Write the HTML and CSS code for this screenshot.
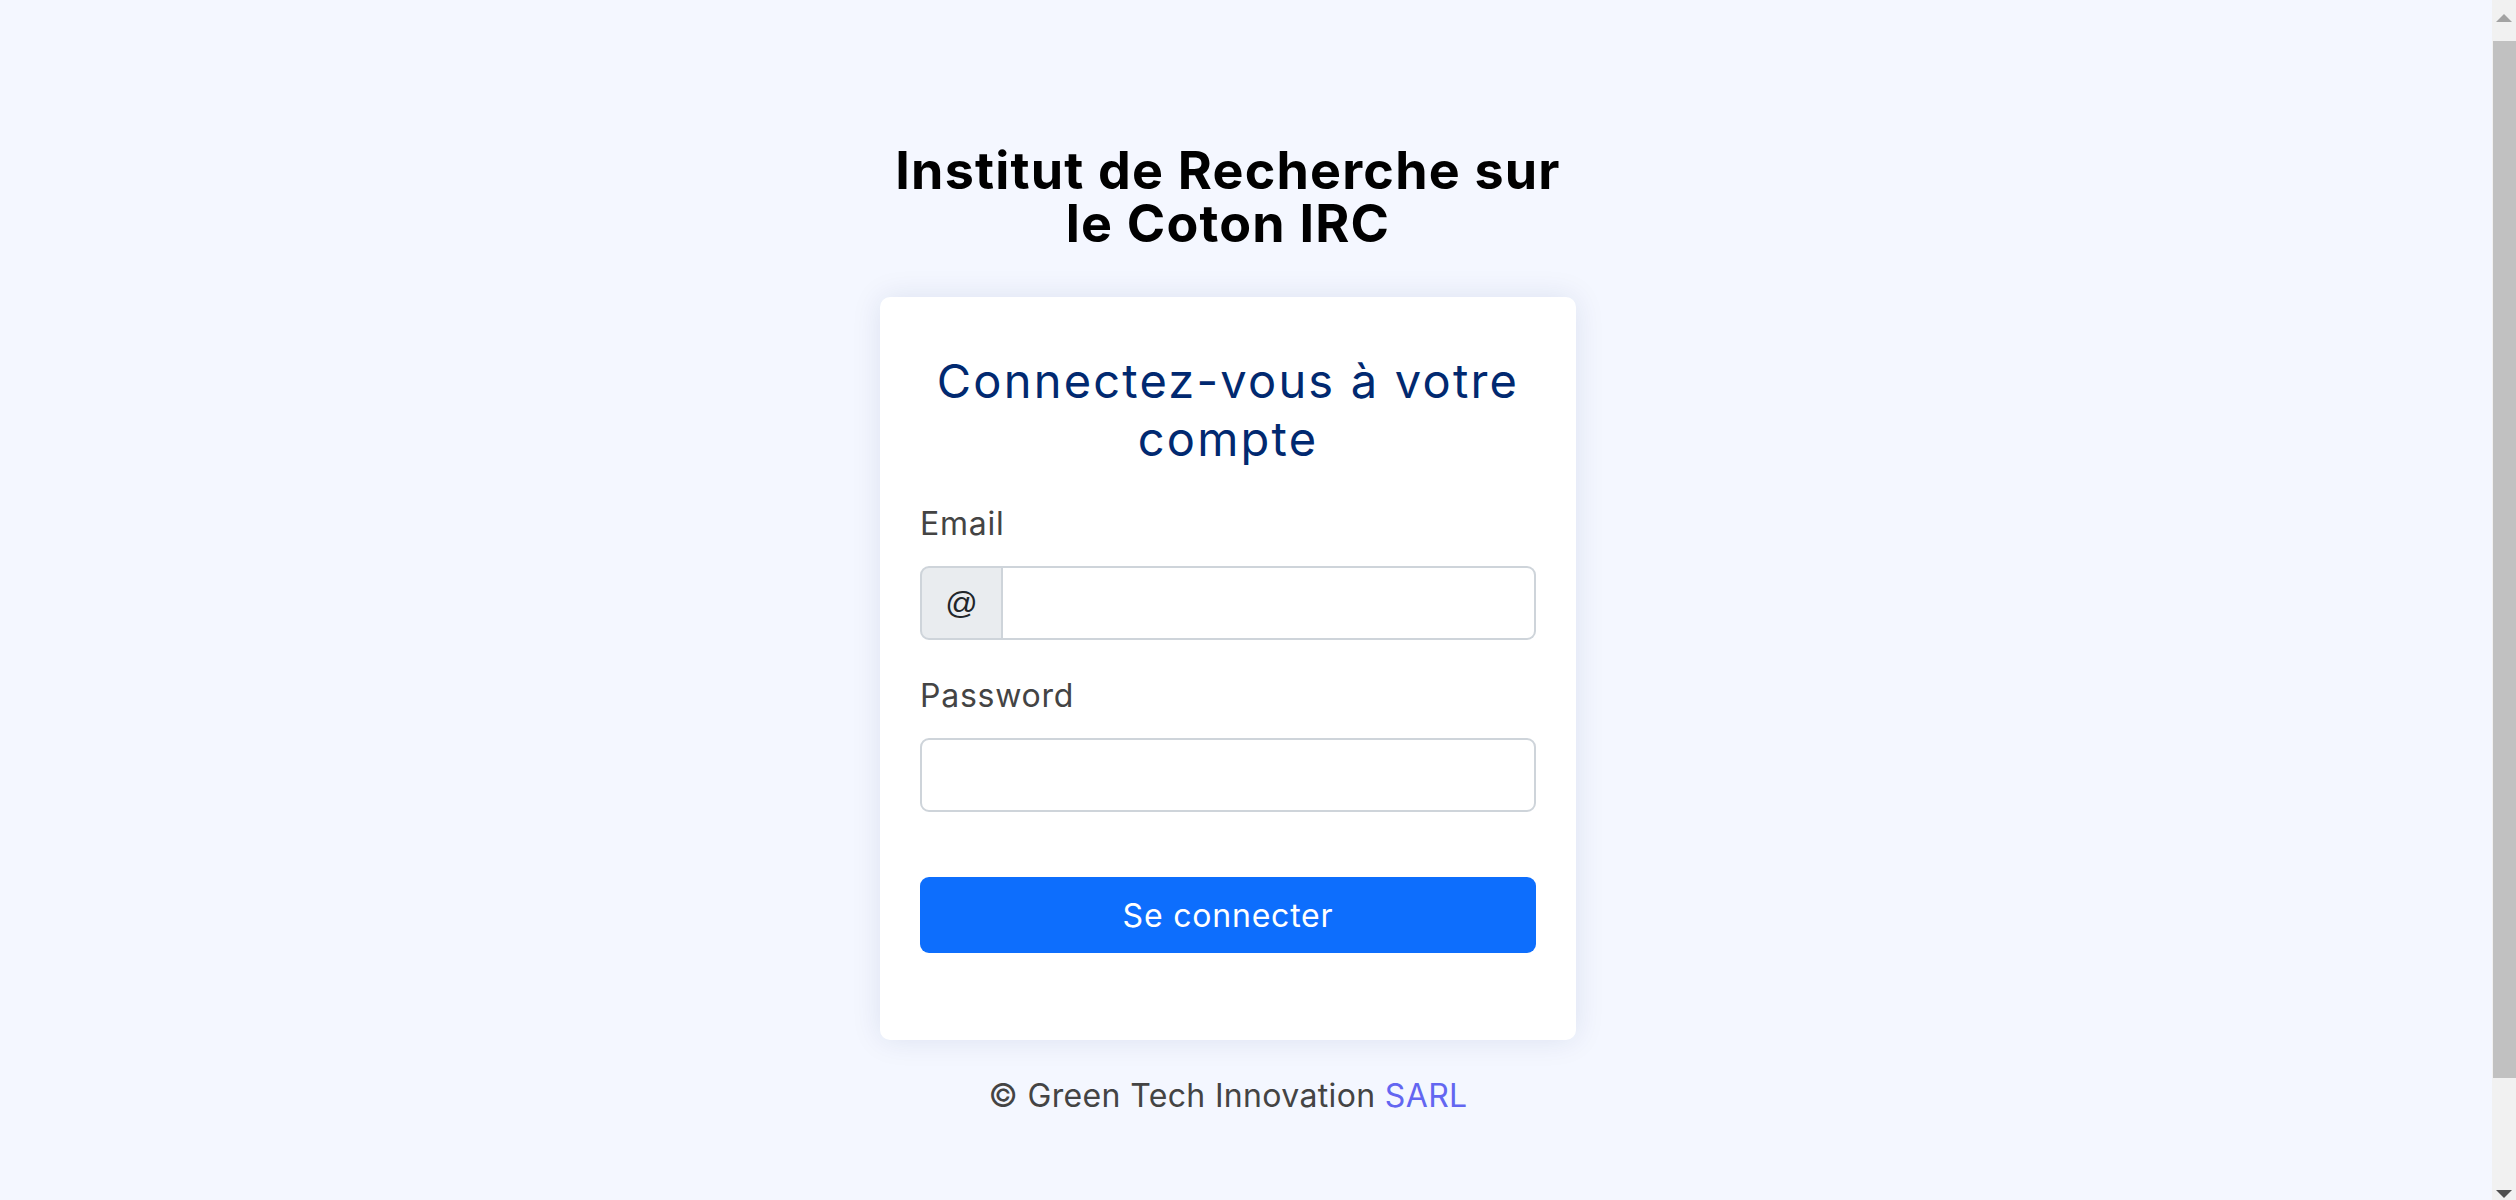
FILE: index.html
```html
<!DOCTYPE html>
<html lang="fr">
<head>
<meta charset="utf-8">
<title>Institut de Recherche sur le Coton IRC - Connexion</title>
<link rel="stylesheet" href="styles.css">
</head>
<body>
<main class="page">
  <section class="login">
    <h1 class="brand">Institut de Recherche sur<br>le Coton IRC</h1>
    <div class="card">
      <h5 class="card-title">Connectez-vous à votre<br>compte</h5>
      <form class="form">
        <label class="label" for="email">Email</label>
        <div class="input-group">
          <span class="addon">@</span>
          <input class="control control-grouped" id="email" type="email">
        </div>
        <label class="label" for="password">Password</label>
        <input class="control" id="password" type="password">
        <button class="btn" type="button">Se connecter</button>
      </form>
    </div>
    <p class="credits">© Green Tech Innovation <a href="#" class="link">SARL</a></p>
  </section>
</main>
<div class="scrollbar" aria-hidden="true">
  <span class="arrow arrow-up"></span>
  <span class="thumb"></span>
  <span class="arrow arrow-down"></span>
</div>
</body>
</html>
```
FILE: styles.css
```css
html { background: #f4f7ff; }
body {
  margin: 0;
  background: #f4f7ff;
  font-family: "Inter", "Open Sans", sans-serif;
  color: #444444;
}
.page { display: block; }
.login {
  width: 696px;
  margin-left: 880px;
  padding-top: 144px;
  display: flex;
  flex-direction: column;
}
.brand {
  margin: 0;
  font-size: 52px;
  line-height: 53px;
  font-weight: 700;
  color: #000;
  text-align: center;
  letter-spacing: 1.2px;
  white-space: nowrap;
}
.card {
  margin-top: 47px;
  background: #fff;
  border-radius: 10px;
  box-shadow: 0 0 30px rgba(1, 41, 112, 0.1);
  padding: 55px 40px 87px;
}
.card-title {
  margin: 0;
  font-size: 47px;
  line-height: 58px;
  font-weight: 400;
  color: #012970;
  text-align: center;
  letter-spacing: 2.2px;
  white-space: nowrap;
}
.form { display: flex; flex-direction: column; margin-top: 32px; }
.label {
  font-size: 32px;
  line-height: 48px;
  color: #444;
  letter-spacing: 0.75px;
  margin-bottom: 18px;
}
.input-group { display: flex; height: 74px; margin-bottom: 32px; }
.addon {
  width: 83px;
  display: flex;
  align-items: center;
  justify-content: center;
  background: #e9ecef;
  border: 2px solid #ced4da;
  border-radius: 9px 0 0 9px;
  font-family: "Liberation Sans", Arial, sans-serif;
  font-size: 32px;
  color: #212529;
  box-sizing: border-box;
}
.control {
  height: 74px;
  box-sizing: border-box;
  border: 2px solid #ced4da;
  border-radius: 9px;
  background: #fff;
  font-size: 32px;
  padding: 0 20px;
  outline: none;
}
.control-grouped {
  flex: 1;
  border-left: 0;
  border-radius: 0 9px 9px 0;
  min-width: 0;
}
.btn {
  margin-top: 65px;
  height: 76px;
  border: 0;
  border-radius: 9px;
  background: #0d6efd;
  color: #fff;
  font-family: "Inter", "Open Sans", sans-serif;
  font-size: 32px;
  letter-spacing: 0.8px;
  padding: 0;
}
.credits {
  margin: 32px 0 0;
  font-size: 32px;
  line-height: 48px;
  text-align: center;
  letter-spacing: 0.35px;
  color: #444;
}
.link { color: #6366f1; text-decoration: none; }

/* imitation of the browser's classic scrollbar seen in the capture */
.scrollbar {
  position: fixed;
  top: 0;
  right: 0;
  width: 24px;
  height: 100vh;
  background: #f1f1f1;
  display: flex;
  flex-direction: column;
  align-items: flex-end;
}
.thumb {
  width: 23px;
  height: 1037px;
  background: #c1c1c1;
  margin-top: 19px;
}
.arrow {
  width: 0;
  height: 0;
  align-self: center;
  border-left: 8px solid transparent;
  border-right: 8px solid transparent;
}
.arrow-up {
  margin-top: 14px;
  border-bottom: 8px solid #a3a3a3;
}
.arrow-down {
  margin-top: auto;
  margin-bottom: 2px;
  border-top: 8px solid #505050;
}
```
